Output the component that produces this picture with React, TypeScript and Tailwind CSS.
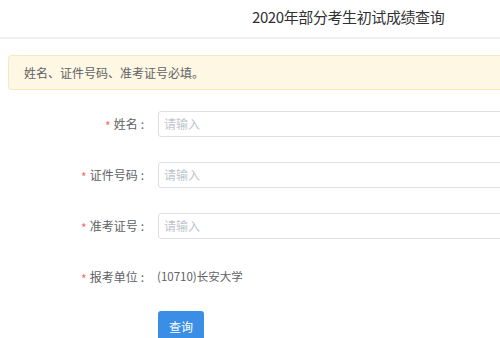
const font = { fontFamily: '"Noto Sans CJK SC", "Noto Sans", sans-serif' };

function Label({ text }: { text: string }) {
  return (
    <div className="w-[144px] shrink-0 text-right text-[12px] text-[#606266] whitespace-nowrap">
      <span className="inline-block translate-y-[2px] text-[#f56c6c] mr-[3px]">*</span>
      {text}
      <span className="ml-[3px]">:</span>
    </div>
  );
}

function InputRow({ label }: { label: string }) {
  return (
    <div className="flex items-center h-[26px]">
      <Label text={label} />
      <div className="ml-[14px] flex-1 h-[26px] border border-[#dcdfe6] rounded-[3px] bg-white flex items-center pl-[5px] -mr-[40px]">
        <span className="text-[12px] text-[#c0c4cc]">请输入</span>
      </div>
    </div>
  );
}

export default function App() {
  return (
    <div className="w-[500px] h-[338px] bg-white overflow-hidden" style={font}>
      {/* Header */}
      <div className="h-[39px] border-b-2 border-[#f0f0f0] flex items-center pl-[252px] pb-[5px]">
        <h1 className="text-[15px] text-[#303133] tracking-[-0.4px] whitespace-nowrap leading-none">
          2020年部分考生初试成绩查询
        </h1>
      </div>

      {/* Notice */}
      <div className="mt-[16px] ml-[8px] -mr-[20px] h-[35px] bg-[#fdf7e4] border border-[#f6e9bd] rounded-[3px] flex items-center pl-[15px]">
        <span className="text-[12px] text-[#606266]">姓名、证件号码、准考证号必填。</span>
      </div>

      {/* Form */}
      <div className="mt-[21px] flex flex-col gap-[25px]">
        <InputRow label="姓名" />
        <InputRow label="证件号码" />
        <InputRow label="准考证号" />
        <div className="flex items-center h-[26px]">
          <Label text="报考单位" />
          <span className="ml-[13px] text-[11.5px] text-[#606266] whitespace-nowrap">(10710)长安大学</span>
        </div>
      </div>

      <div className="mt-[21px] pl-[158px]">
        <button className="w-[46px] h-[32px] bg-[#3a8ee6] rounded-[3px] text-white text-[12px]">查询</button>
      </div>
    </div>
  );
}
